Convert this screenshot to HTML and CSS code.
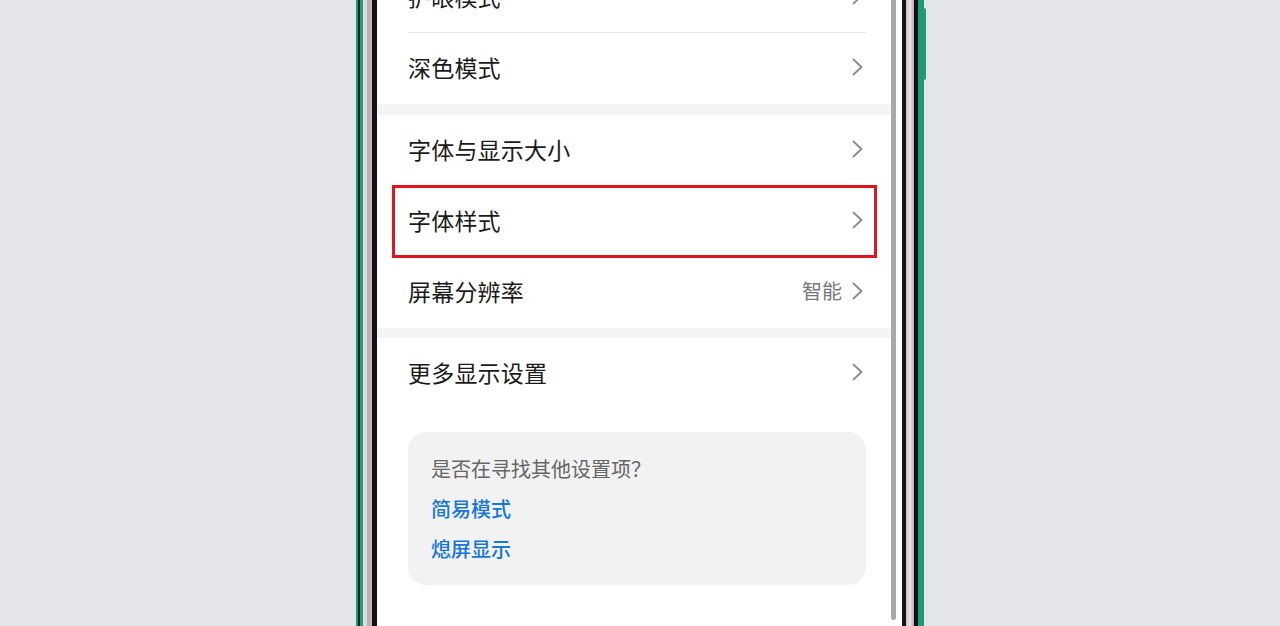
FILE: index.html
```html
<!DOCTYPE html>
<html lang="zh-CN">
<head>
  <meta charset="UTF-8" />
  <meta name="viewport" content="width=device-width, initial-scale=1.0" />
  <title>显示与亮度</title>
  <link rel="stylesheet" href="styles.css">
</head>
<body>

<div class="phone">
  <div class="bezel bezel-left"></div>

  <div class="screen">
    <div class="content">
      <div class="list">
        <div class="group">
          <div class="row divided">
            <span class="label">护眼模式</span>
            <svg class="chevron" viewBox="0 0 11 18"><polyline points="1.5,1.5 9.5,9 1.5,16.5" /></svg>
          </div>
          <div class="row">
            <span class="label">深色模式</span>
            <svg class="chevron" viewBox="0 0 11 18"><polyline points="1.5,1.5 9.5,9 1.5,16.5" /></svg>
          </div>
        </div>

        <div class="band"></div>

        <div class="group">
          <div class="row">
            <span class="label">字体与显示大小</span>
            <svg class="chevron" viewBox="0 0 11 18"><polyline points="1.5,1.5 9.5,9 1.5,16.5" /></svg>
          </div>
          <div class="row highlighted">
            <span class="label">字体样式</span>
            <svg class="chevron" viewBox="0 0 11 18"><polyline points="1.5,1.5 9.5,9 1.5,16.5" /></svg>
            <div class="mark"></div>
          </div>
          <div class="row">
            <span class="label">屏幕分辨率</span>
            <span class="value">智能</span>
            <svg class="chevron" viewBox="0 0 11 18"><polyline points="1.5,1.5 9.5,9 1.5,16.5" /></svg>
          </div>
        </div>

        <div class="band thin"></div>

        <div class="group">
          <div class="row">
            <span class="label">更多显示设置</span>
            <svg class="chevron" viewBox="0 0 11 18"><polyline points="1.5,1.5 9.5,9 1.5,16.5" /></svg>
          </div>
        </div>

        <div class="hint">
          <div class="hint-title">是否在寻找其他设置项？</div>
          <a class="hint-link" href="#">简易模式</a>
          <a class="hint-link" href="#">熄屏显示</a>
        </div>
      </div>
    </div>

    <div class="scroll-track">
      <div class="scroll-thumb"></div>
    </div>
  </div>

  <div class="bezel bezel-right">
    <div class="side-key"></div>
  </div>
</div>

</body>
</html>
```

FILE: styles.css
```css
* {
  box-sizing: border-box;
}
html, body {
  height: 100%;
}
body {
  margin: 0;
  background: #e3e5e8;
  font-family: "Noto Sans CJK SC", "Noto Sans", sans-serif;
  display: flex;
  justify-content: center;
  overflow: hidden;
}

/* phone frame */
.phone {
  width: 568px;
  height: 626px;
  display: flex;
}

.bezel {
  position: relative;
  flex-shrink: 0;
}

.bezel-left {
  width: 21px;
  background: linear-gradient(to right,
    #1d9472 0, #1d9472 2px,
    #0f1c18 2px, #0f1c18 4px,
    #22a07d 4px, #22a07d 7px,
    #dcdcdf 7px, #dcdcdf 11px,
    #b9abb3 11px, #c4b6be 16px,
    #121212 16px, #121212 21px);
}

.bezel-right {
  width: 22px;
  background: linear-gradient(to right,
    #141414 0, #141414 4px,
    #cdbcc6 4px, #efe4ea 8px, #b9a8b2 12px,
    #121212 12px, #121212 16px,
    #1e9a77 16px, #1e9a77 22px);
}

.side-key {
  position: absolute;
  right: -2px;
  top: 8px;
  width: 3px;
  height: 72px;
  background: #1e9a77;
  border-radius: 0 2px 2px 0;
}

.screen {
  flex: 1;
  display: flex;
  background: #fff;
  overflow: hidden;
}

.content {
  flex: 1;
  overflow: hidden;
}

.scroll-track {
  width: 5px;
  margin-right: 6px;
}

.scroll-thumb {
  height: 620px;
  background: #a8a8a8;
  border-radius: 0 0 3px 3px;
}

/* settings list */
.list {
  margin-top: -38px;
}

.band {
  height: 11px;
  background: #f4f4f4;
}
.band.thin {
  height: 10px;
}

.row {
  position: relative;
  height: 71px;
  display: flex;
  align-items: center;
  padding: 0 28px 4px 31px;
}

.row.divided::after {
  content: "";
  position: absolute;
  left: 31px;
  right: 25px;
  bottom: 0;
  height: 1px;
  background: #e6e6e6;
}

.label {
  flex: 1;
  font-size: 23px;
  color: #1b1b1b;
  letter-spacing: 0.2px;
}

.value {
  font-size: 20px;
  color: #777;
  margin-right: 10px;
}

.chevron {
  width: 11px;
  height: 18px;
  fill: none;
  stroke: #8a8a8a;
  stroke-width: 1.8;
  stroke-linecap: round;
  stroke-linejoin: round;
}

/* red annotation box */
.mark {
  position: absolute;
  top: -1px;
  bottom: -1px;
  left: 15px;
  right: 14px;
  border: 3px solid #e1151d;
  pointer-events: none;
}

/* hint card */
.hint {
  margin: 23px 25px 0 31px;
  height: 153px;
  padding: 17px 23px 15px;
  background: #f2f2f2;
  border-radius: 18px;
}

.hint-title {
  font-size: 20px;
  line-height: 40px;
  color: #666;
}

.hint-link {
  display: block;
  font-size: 20px;
  line-height: 40px;
  font-weight: 500;
  color: #1677d9;
  text-decoration: none;
}
```
